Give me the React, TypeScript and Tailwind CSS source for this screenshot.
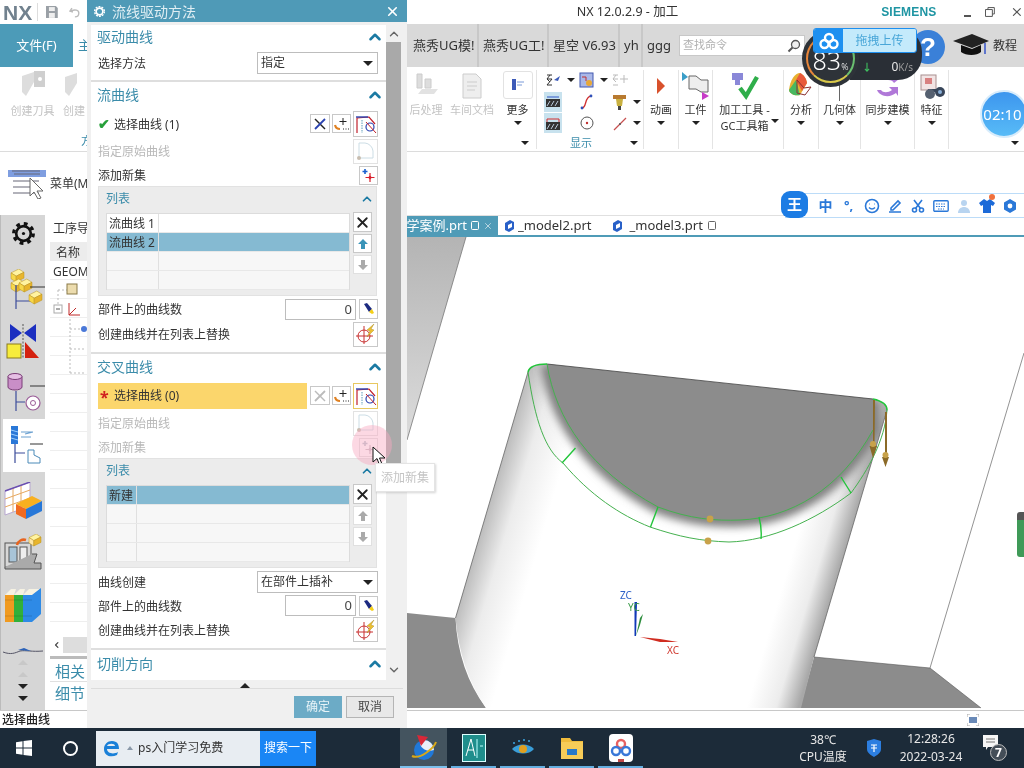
import { ChevronDown, ChevronLeft, ChevronUp, X } from "lucide-react";
import type { ReactNode } from "react";

function Caret({ className = "" }: { className?: string }) {
  return <span className={`inline-block w-0 h-0 border-x-[4px] border-x-transparent border-t-[4px] border-t-[#222] ${className}`} />;
}

function Cube({ x, y, s, c = "#f7d84a" }: { x: number; y: number; s: number; c?: string }) {
  return (
    <g stroke="#b8901c" strokeWidth="0.5">
      <polygon points={`${x},${y + s * 0.3} ${x + s * 0.6},${y} ${x + s},${y + s * 0.25} ${x + s * 0.4},${y + s * 0.55}`} fill="#fff3a0" />
      <polygon points={`${x},${y + s * 0.3} ${x + s * 0.4},${y + s * 0.55} ${x + s * 0.4},${y + s} ${x},${y + s * 0.75}`} fill={c} />
      <polygon points={`${x + s * 0.4},${y + s * 0.55} ${x + s},${y + s * 0.25} ${x + s},${y + s * 0.7} ${x + s * 0.4},${y + s}`} fill="#e8b52c" />
    </g>
  );
}

function TreeStem() {
  return (
    <g fill="none">
      <path d="M27 4H42" stroke="#333" strokeWidth="1" />
      <path d="M13 2V30M13 18H28" stroke="#3b4b9a" strokeWidth="1.2" />
    </g>
  );
}

/* left vertical tab strip */
function GearBig() {
  return (
    <svg width="25" height="25" viewBox="0 0 28 28">
      <circle cx="14" cy="14" r="11" fill="none" stroke="#111" strokeWidth="3.6" strokeDasharray="4.2 4.44" />
      <circle cx="14" cy="14" r="8.2" fill="none" stroke="#111" strokeWidth="3" />
      <circle cx="14" cy="14" r="1.8" fill="#111" />
    </svg>
  );
}

function SideGeometry() {
  return (
    <svg width="42" height="40" viewBox="0 0 42 40">
      <Cube x={8} y={0} s={13} />
      <Cube x={8} y={10} s={13} />
      <Cube x={16} y={10} s={13} />
      <g transform="translate(0,14)"><TreeStem /></g>
      <Cube x={26} y={22} s={13} />
    </svg>
  );
}

function SideMirror() {
  return (
    <svg width="34" height="38" viewBox="0 0 34 38">
      <polygon points="4,2 16,11 4,20" fill="#1c2fc0" />
      <polygon points="30,2 18,11 30,20" fill="#1c2fc0" />
      <rect x="1" y="22" width="14" height="14" fill="#f7ec3b" stroke="#8a7a20" />
      <polygon points="19,20 33,36 19,36" fill="#d4210f" />
      <path d="M17 2V37" stroke="#555" strokeDasharray="2 1.5" />
    </svg>
  );
}

function SideTool() {
  return (
    <svg width="42" height="40" viewBox="0 0 42 40">
      <path d="M5 9V4a7 3 0 0 1 14 0V14a7 3 0 0 1-14 0Z" fill="#c98ec7" stroke="#7b3e78" />
      <ellipse cx="12" cy="3.5" rx="7" ry="3" fill="#e6bfe4" stroke="#7b3e78" />
      <path d="M27 13H42" stroke="#333" />
      <path d="M13 18V38M13 29H22" stroke="#3b4b9a" strokeWidth="1.2" />
      <circle cx="30" cy="30" r="7" fill="#fff" stroke="#9a5d98" strokeWidth="1.2" />
      <circle cx="30" cy="30" r="2.5" fill="none" stroke="#9a5d98" />
    </svg>
  );
}

function SideOperation() {
  return (
    <svg width="38" height="40" viewBox="0 0 38 40">
      <rect x="6" y="0" width="7" height="18" fill="#2a78d8" />
      <path d="M6 4l7 2M6 8l7 2M6 12l7 2" stroke="#9dd0ff" />
      <path d="M16 6h12M16 11h10M20 8l8-2" stroke="#6ba0d0" strokeWidth="1.2" fill="none" />
      <path d="M25 18H38" stroke="#333" />
      <path d="M10 18V37M10 27H20" stroke="#3b4b9a" strokeWidth="1.2" />
      <path d="M23 24h6v5l6 3v5H23Z" fill="#fff" stroke="#4a8ab8" />
    </svg>
  );
}

function SideTable() {
  return (
    <svg width="38" height="38" viewBox="0 0 38 38">
      <polygon points="1,9 26,0 26,24 1,33" fill="#fff" stroke="#b8a8d0" />
      <path d="M1 17l25-9M1 25l25-9M9 6v24M17 3v24" stroke="#e6a860" />
      <path d="M1 9L26 0" stroke="#6a4fb0" strokeWidth="1.4" />
      <polygon points="12,22 28,14 38,19 22,27" fill="#f8b020" />
      <polygon points="12,22 22,27 22,37 12,32" fill="#f06a20" />
      <polygon points="22,27 38,19 38,29 22,37" fill="#2878d8" />
    </svg>
  );
}

function SideMachine() {
  return (
    <svg width="38" height="38" viewBox="0 0 38 38">
      <rect x="1" y="9" width="26" height="24" fill="#d8d8d8" stroke="#555" />
      <rect x="5" y="13" width="8" height="15" fill="#a8c4d8" stroke="#555" />
      <rect x="16" y="13" width="7" height="15" fill="#eee" stroke="#555" />
      <path d="M28 20h5l-3 9h7v6H1v-2" fill="#aaa" stroke="#555" />
      <path d="M13 11a7 7 0 0 1 9-5" fill="none" stroke="#e8641e" strokeWidth="2.5" />
      <Cube x={25} y={0} s={12} c="#ffe7a6" />
    </svg>
  );
}

function SideBooks() {
  return (
    <svg width="38" height="34" viewBox="0 0 38 34">
      <path d="M1 7 7 1H12L10 7Z" fill="#f6f2e2" />
      <rect x="1" y="7" width="9" height="27" fill="#f09a20" />
      <path d="M10 7 16 1H21L19 7Z" fill="#f6f2e2" />
      <rect x="10" y="7" width="9" height="27" fill="#32b03a" />
      <path d="M19 7 25 1H36L28 7Z" fill="#f6f2e2" />
      <polygon points="19,7 28,7 37,0 37,26 28,34 19,34" fill="#2e8ae6" />
      <path d="M1 12h27M1 28h27" stroke="#0002" />
    </svg>
  );
}

/* dialog small button drawings */
function CrossArrows({ muted }: { muted?: boolean }) {
  return (
    <svg width="14" height="14" viewBox="0 0 14 14">
      <path d="M2 2 12 12" stroke={muted ? "#bbb" : "#222"} strokeWidth="1.4" />
      <path d="M12 2 2 12" stroke={muted ? "#bbb" : "#2a42b0"} strokeWidth="1.8" />
    </svg>
  );
}

function PlusCurve() {
  return (
    <svg width="16" height="14" viewBox="0 0 16 14">
      <path d="M9 1v7M5.5 4.5h7" stroke="#222" strokeWidth="1" />
      <path d="M1 8q1 4 5 4" stroke="#e08020" strokeWidth="2.2" fill="none" />
      <path d="M9 12h1M11.5 12h1M14 12h1" stroke="#222" />
    </svg>
  );
}

function SelectCurve() {
  return (
    <svg width="22" height="20" viewBox="0 0 22 20">
      <path d="M2 19V4L14 3 20 10" fill="none" stroke="#c0202c" strokeWidth="1.2" />
      <path d="M1 3h12" stroke="#2a42b0" strokeWidth="1.4" />
      <path d="M7 6v13" stroke="#5a9ab8" strokeDasharray="1.5 1" />
      <circle cx="15" cy="13" r="4" fill="none" stroke="#2a42b0" strokeWidth="1.2" />
      <path d="M11 8 21 19" stroke="#c0202c" strokeWidth="1" />
    </svg>
  );
}

function OriginCurve() {
  return (
    <svg width="20" height="20" viewBox="0 0 20 20">
      <path d="M3 17V2h6a9 9 0 0 1 8 8v7Z" fill="none" stroke="#ccdde5" />
      <circle cx="3" cy="17" r="2" fill="#c8bdb0" />
    </svg>
  );
}

function SparkPlus({ muted }: { muted?: boolean }) {
  return (
    <svg width="14" height="14" viewBox="0 0 14 14">
      <path d="M8 5v9M3.500 9.500h9" stroke={muted ? "#c8bcc4" : "#d8202c"} strokeWidth="1.2" />
      <path d="M8 7.500 10 9.500 8 11.500 6 9.500Z" fill={muted ? "#c8bcc4" : "#d8202c"} />
      <path d="M3 1v5M0.500 3.500h5" stroke={muted ? "#b8c4cc" : "#1a60d0"} strokeWidth="1.6" />
    </svg>
  );
}

function PointerTool() {
  return (
    <svg width="12" height="12" viewBox="0 0 12 12">
      <path d="M1 1 4 0 9 6 6 9Z" fill="#1c2a80" />
      <path d="M6 9 9 6 11 10 9 11Z" fill="#f5d018" />
    </svg>
  );
}

function TargetBolt() {
  return (
    <svg width="22" height="22" viewBox="0 0 22 22">
      <circle cx="9" cy="13" r="6" fill="none" stroke="#c83030" />
      <path d="M9 3v18M1 13h17" stroke="#c83030" />
      <path d="M19 1 12 7l3 1-3 6 7-7-3-1Z" fill="#eec030" stroke="#a08018" strokeWidth="0.4" />
    </svg>
  );
}

function IconBtn({ children, className = "" }: { children: ReactNode; className?: string }) {
  return <div className={`flex items-center justify-center border border-[#c8c8c8] bg-white ${className}`}>{children}</div>;
}

function ArrowFat({ up, color }: { up?: boolean; color: string }) {
  return (
    <svg width="12" height="12" viewBox="0 0 12 12" className={up ? "" : "rotate-180"}>
      <path d="M6 1 11 6H8V11H4V6H1Z" fill={color} />
    </svg>
  );
}

function SectionHead({ title, className }: { title: string; className: string }) {
  return (
    <div className={`flex items-center justify-between pl-[6px] ${className}`}>
      <span className="text-[14px] text-[#3b8caa] -mt-[2px]">{title}</span>
      <ChevronUp size={18} strokeWidth={3.4} className="text-[#1b7aa3] -mr-[6px] -mt-[1px]" />
    </div>
  );
}

function ListBox({ rows, colW, active, upOn }: { rows: string[]; colW: string; active: number; upOn: boolean }) {
  return (
    <div className="ml-[7px] w-[279px] h-[110px] bg-[#ececec] border border-[#e2e2e2] relative">
      <div className="h-[26px] flex items-center justify-between pl-[7px] pr-[2px]">
        <span className="text-[12px] text-[#3b8caa] -mt-[3px]">列表</span>
        <ChevronUp size={14} strokeWidth={3} className="text-[#1b7aa3] -mt-[3px]" />
      </div>
      <div className="flex pl-[7px] gap-[3px]">
        <div className="w-[244px] h-[77px] bg-[#f7f7f7] border border-[#dcdcdc]">
          {[0, 1, 2, 3].map((i) => (
            <div key={i} className={`flex h-[19px] text-[12px] border-b border-[#e8e8e8] ${i === active ? "bg-[#85bad2]" : i < rows.length ? "bg-white" : ""}`}>
              <div className={`${colW} pl-[2px] border-r border-[#e0e0e0] leading-[20px] text-[#333]`}>{rows[i]}</div>
            </div>
          ))}
        </div>
        <div className="flex flex-col gap-[2px] -mt-[1px]">
          <IconBtn className="w-[19px] h-[20px]"><X size={17} strokeWidth={2.6} className="text-[#222]" /></IconBtn>
          <IconBtn className={`w-[19px] h-[19px] ${upOn ? "" : "border-[#e0e0e0] bg-[#f2f2f2]"}`}><ArrowFat up color={upOn ? "#3a94b8" : "#aaa"} /></IconBtn>
          <IconBtn className="w-[19px] h-[19px] border-[#e0e0e0] bg-[#f2f2f2]"><ArrowFat color="#aaa" /></IconBtn>
        </div>
      </div>
    </div>
  );
}

function DropDown({ text }: { text: string }) {
  return (
    <div className="w-[121px] h-[22px] border border-[#bdbdbd] bg-white flex items-center justify-between pl-[3px] pr-[4px] text-[12px] text-[#333]">
      {text}
      <Caret className="border-x-[5px] border-t-[5px]" />
    </div>
  );
}

function CountRow() {
  return (
    <div className="flex items-center gap-[3px]">
      <div className="w-[71px] h-[21px] border border-[#bdbdbd] bg-white text-right pr-[3px] text-[13px] leading-[19px] text-[#444]">0</div>
      <IconBtn className="w-[19px] h-[20px]"><PointerTool /></IconBtn>
    </div>
  );
}

function Row({ label, h, muted, children }: { label: string; h: string; muted?: boolean; children?: ReactNode }) {
  return (
    <div className={`flex items-center justify-between pl-[7px] ${h}`}>
      <span className={`text-[12px] mt-[2px] ${muted ? "text-[#b8b8b8]" : "text-[#333]"}`}>{label}</span>
      {children}
    </div>
  );
}

function SelectorTools({ muted }: { muted?: boolean }) {
  return (
    <>
      <IconBtn className="w-[20px] h-[19px] ml-[3px]"><CrossArrows muted={muted} /></IconBtn>
      <IconBtn className="w-[19px] h-[19px] ml-[2px]"><PlusCurve /></IconBtn>
      <IconBtn className={`w-[25px] h-[26px] ml-[2px] ${muted ? "border-[#e8c860] bg-[#fbd66c]" : ""}`}><SelectCurve /></IconBtn>
    </>
  );
}

function FlowDialog() {
  return (
    <div className="absolute left-[87px] top-0 w-[320px] h-[728px] bg-[#f0f0f0] flex flex-col">
      <div className="h-[22px] shrink-0 bg-[#4f9ab7] flex items-center pl-[6px] pr-[7px] text-white">
        <svg width="13" height="13" viewBox="0 0 14 14">
          <circle cx="7" cy="7" r="5.2" fill="none" stroke="#fff" strokeWidth="1.6" strokeDasharray="2 1.26" />
          <circle cx="7" cy="7" r="3.6" fill="none" stroke="#fff" strokeWidth="1.8" />
        </svg>
        <span className="ml-[6px] text-[14px] text-[#e0eef3]">流线驱动方法</span>
        <X size={15} strokeWidth={2.6} className="ml-auto" />
      </div>
      <div className="flex pl-[4px] h-[658px] pt-[3px]">
        <div className="w-[295px] bg-white">
          <section className="h-[57px] border-b-2 border-[#dedede] pr-[8px]">
            <SectionHead title="驱动曲线" className="h-[24px]" />
            <Row label="选择方法" h="h-[26px] mt-[1px]"><DropDown text="指定" /></Row>
          </section>
          <section className="h-[272px] border-b-2 border-[#dedede] pr-[8px]">
            <SectionHead title="流曲线" className="h-[27px]" />
            <div className="h-[29px] flex items-center pl-[7px]">
              <span className="text-[#27a03a] text-[14px] font-bold w-[16px] leading-none">✔</span>
              <span className="text-[12px] text-[#333] mt-[2px]">选择曲线 (1)</span>
              <div className="ml-auto flex items-center"><SelectorTools /></div>
            </div>
            <Row label="指定原始曲线" h="h-[26px]" muted><IconBtn className="w-[25px] h-[25px] border-[#e2e2e2]"><OriginCurve /></IconBtn></Row>
            <Row label="添加新集" h="h-[22px]"><IconBtn className="w-[19px] h-[19px]"><SparkPlus /></IconBtn></Row>
            <ListBox rows={["流曲线 1", "流曲线 2"]} colW="w-[52px]" active={1} upOn />
            <div className="h-px" />
            <Row label="部件上的曲线数" h="h-[24px]"><CountRow /></Row>
            <Row label="创建曲线并在列表上替换" h="h-[26px]"><IconBtn className="w-[25px] h-[25px]"><TargetBolt /></IconBtn></Row>
          </section>
          <section className="h-[296px] border-b-2 border-[#dedede] pr-[8px]">
            <SectionHead title="交叉曲线" className="h-[27px]" />
            <div className="h-[29px] flex items-center pl-[7px]">
              <div className="w-[210px] h-[26px] bg-[#fbd66c] flex items-center">
                <span className="text-[#d02020] text-[16px] font-bold w-[16px] pl-[2px] leading-none pt-[3px]">*</span>
                <span className="text-[12px] text-[#333] mt-[1px]">选择曲线 (0)</span>
              </div>
              <div className="ml-auto flex items-center"><SelectorTools muted /></div>
            </div>
            <Row label="指定原始曲线" h="h-[26px]" muted><IconBtn className="w-[25px] h-[25px] border-[#e2e2e2]"><OriginCurve /></IconBtn></Row>
            <Row label="添加新集" h="h-[22px]" muted><IconBtn className="w-[19px] h-[19px] border-[#e2e2e2]"><SparkPlus muted /></IconBtn></Row>
            <ListBox rows={["新建"]} colW="w-[30px]" active={0} upOn={false} />
            <div className="h-px" />
            <Row label="曲线创建" h="h-[26px]"><DropDown text="在部件上插补" /></Row>
            <Row label="部件上的曲线数" h="h-[21px]"><CountRow /></Row>
            <Row label="创建曲线并在列表上替换" h="h-[27px]"><IconBtn className="w-[25px] h-[25px]"><TargetBolt /></IconBtn></Row>
          </section>
          <section className="pr-[8px]">
            <SectionHead title="切削方向" className="h-[29px]" />
          </section>
        </div>
        <div className="w-[21px] flex flex-col items-center">
          <ChevronUp size={14} strokeWidth={2.4} className="text-[#666] mt-[2px] mr-[6px]" />
          <div className="w-[15px] h-[423px] mt-[1px] mr-[6px] bg-[#a9a9a9]" />
          <ChevronDown size={14} strokeWidth={2.4} className="text-[#666] mt-[198px] mr-[6px]" />
        </div>
      </div>
      <div className="flex justify-center pr-[4px] pt-[3px] h-[8px]">
        <span className="w-0 h-0 border-x-[5px] border-x-transparent border-b-[5px] border-b-[#222]" />
      </div>
      <div className="mx-[4px] border-t border-[#dcdcdc] mt-0" />
      <div className="flex justify-end gap-[4px] pr-[13px] pt-[7px]">
        <div className="w-[48px] h-[22px] bg-[#6cabc6] text-[#e8f4f8] text-[12px] flex items-center justify-center">确定</div>
        <div className="w-[48px] h-[22px] bg-[#e8e8e8] border border-[#b5b5b5] text-[#444] text-[12px] flex items-center justify-center">取消</div>
      </div>
    </div>
  );
}

/* 3D viewport, drawn in page coordinates */
function ModelView() {
  const inner = "M547 364C556 420 590 470 658 507 C690 519 715 521 740 520 C790 518 840 490 873 430 L873 399";
  return (
    <svg viewBox="407 237 617 473" className="block w-full h-[473px]">
      <defs>
        <linearGradient id="bodyShade" gradientUnits="userSpaceOnUse" x1="528" y1="372" x2="868" y2="473">
          <stop offset="0" stopColor="#bcbcbc" />
          <stop offset="0.07" stopColor="#ececec" />
          <stop offset="0.17" stopColor="#fff" />
          <stop offset="0.86" stopColor="#fff" />
          <stop offset="0.94" stopColor="#ececec" />
          <stop offset="1" stopColor="#a8a8a8" />
        </linearGradient>
        <linearGradient id="stripShade" x1="0" y1="0" x2="0" y2="1">
          <stop offset="0" stopColor="#b4b4b4" />
          <stop offset="1" stopColor="#dcdcdc" />
        </linearGradient>
        <filter id="soft" x="-20%" y="-20%" width="140%" height="140%"><feGaussianBlur stdDeviation="4" /></filter>
        <clipPath id="bodyClip">
          <path d="M528 372Q530 364 547 364L873 399Q887 402 887 410L814 657 801 708H486Q460 670 455.500 618Z" />
        </clipPath>
      </defs>
      <rect x="407" y="237" width="617" height="473" fill="#fff" />
      <polygon points="407,237 466,237 407,440" fill="url(#stripShade)" />
      <path d="M466 237 407 440M1024 353 930 668" stroke="#777" strokeWidth="0.8" fill="none" />
      <polygon points="814,657 930,668 981,708 800,708" fill="#8c8c8c" />
      <path d="M407 613 455.500 618Q458 670 486 708H407Z" fill="#8c8c8c" />
      <path d="M814 657 930 668 981 708" stroke="#555" strokeWidth="0.6" fill="none" />
      <path d="M528 372Q530 364 547 364L873 399Q887 402 887 410L814 657 801 708H486Q460 670 455.500 618Z" fill="url(#bodyShade)" />
      <path d="M528 372 455.500 618M887 410 814 657" stroke="#666" strokeWidth="0.8" fill="none" />
      <g clipPath="url(#bodyClip)">
        <path d={inner} fill="none" stroke="#7c7c7c" strokeWidth="13" filter="url(#soft)" />
      </g>
      <path d={`${inner}Z`} fill="#8c8c8c" />
      <path d="M547 364 873 399" stroke="#444" strokeWidth="0.8" />
      <g fill="none" stroke="#45b14f" strokeWidth="1">
        <path d={inner.replace(" L873 399", "")} strokeWidth="1" />
        <path d="M528 372C535 420 545 450 563 463 C590 495 620 515 650 527 C680 537 700 541 729 542 C770 541 815 520 851 493 C868 470 885 440 887 410" />
        <path d="M528 372Q530 364 547 364M873 399Q887 402 887 410" stroke="#22c53a" strokeWidth="1.6" />
        <path d="M575.500 448 562 463M658 507 650.500 527M759 517Q762 528 761 539M841 477 851 493" stroke="#22c53a" strokeWidth="1.4" />
      </g>
      <circle cx="710" cy="519" r="3.4" fill="#c8a24a" />
      <circle cx="708" cy="541" r="3.4" fill="#c8a24a" />
      <g fill="#8b6a28">
        <polygon points="873,400 875,400 874.500,444 873,444" />
        <polygon points="869.500,446 877,446 873,458" />
        <polygon points="885,412 887,412 887,455 885,455" />
        <polygon points="882,457 889,457 885.500,467" />
      </g>
      <circle cx="873" cy="444" r="3" fill="#c8a24a" />
      <circle cx="885.500" cy="455" r="3" fill="#c8a24a" />
      <polygon points="634.500,602 637,602 636,636 634.500,636" fill="#1038b8" />
      <polygon points="636,636 640,618 643,614 640,625" fill="#2c8c3c" />
      <polygon points="640,637 660,639 678,642 660,642" fill="#d02c20" />
      <text x="620" y="599" fontSize="10" fill="#2e62c8" fontFamily="Noto Sans">ZC</text>
      <text x="628" y="611" fontSize="10" fill="#3a9a48" fontFamily="Noto Sans">YC</text>
      <text x="667" y="654" fontSize="10" fill="#d03a30" fontFamily="Noto Sans">XC</text>
    </svg>
  );
}

function RibbonTool({ w, icon, label, disabled, arrow = true }: { w: string; icon: ReactNode; label: string; disabled?: boolean; arrow?: boolean }) {
  return (
    <div className={`flex flex-col items-center shrink-0 h-full ${w}`}>
      <div className="h-[31px] flex items-center justify-center">{icon}</div>
      <span className={`text-[11px] leading-[15px] whitespace-nowrap mt-[1px] ${disabled ? "text-[#c4c4c4]" : "text-[#333]"}`}>{label}</span>
      {arrow && <Caret className="mt-[4px]" />}
    </div>
  );
}

function MiniGlyph({ children }: { children: ReactNode }) {
  return <svg width="20" height="20" viewBox="0 0 20 20">{children}</svg>;
}

function ShowGroup() {
  const cell = "flex items-center gap-[3px] h-[21px] w-[33px]";
  const lit = "w-[18px] h-[20px] bg-[#c8e2ee] flex items-center justify-center";
  return (
    <div className="w-[107px] h-full border-r border-[#e4e4e4] pl-[7px] relative shrink-0">
      <div className="flex flex-col -mt-[1px]">
        <div className="flex mb-[1px]">
          <div className={cell}>
            <MiniGlyph><path d="M3 5h5M3 9h5M6 5l-3 4 3 3M3 15h5M8 9l-5 6" stroke="#333" fill="none" /><path d="M10 10l6-4-2 5Z" fill="#3c5ab8" /></MiniGlyph>
            <Caret />
          </div>
          <div className={cell}>
            <MiniGlyph><rect x="3" y="3" width="13" height="14" fill="#aab8e8" stroke="#4258b0" /><circle cx="12" cy="13" r="3" fill="#e8a838" /><path d="M5 7h4v4" stroke="#c03030" fill="none" /></MiniGlyph>
            <Caret />
          </div>
          <div className={cell}>
            <MiniGlyph><path d="M3 5h5M3 9h5M6 5l-3 4 3 3M3 15h5" stroke="#bbb" fill="none" /><path d="M14 5v8M10 9h8" stroke="#bbb" /></MiniGlyph>
          </div>
        </div>
        <div className="flex">
          <div className={cell}><div className={lit}><svg width="14" height="11" viewBox="0 0 14 11"><rect y="3" width="14" height="8" fill="#333" /><path d="M1 10l3-5M5 10l3-5M9 10l3-5" stroke="#bcd" /><path d="M1 1h12" stroke="#3058c8" /></svg></div></div>
          <div className={cell}><MiniGlyph><path d="M5 16c5 0 2-11 9-12" stroke="#d03030" strokeWidth="1.3" fill="none" /><circle cx="5" cy="16" r="1.4" fill="#3050b8" /><circle cx="14" cy="4" r="1.4" fill="#3050b8" /></MiniGlyph></div>
          <div className={cell}>
            <MiniGlyph><rect x="3" y="3" width="13" height="4" fill="#b87a30" /><polygon points="6,7 13,7 12,14 7,14" fill="#c8b040" /><rect x="8" y="14" width="3" height="4" fill="#444" /></MiniGlyph>
            <Caret />
          </div>
        </div>
        <div className="flex">
          <div className={cell}><div className={lit}><svg width="14" height="14" viewBox="0 0 14 14"><rect y="6" width="14" height="8" fill="#333" /><path d="M1 13l3-5M5 13l3-5M9 13l3-5" stroke="#bcd" /><path d="M1 6V3h12v3" stroke="#d03030" fill="none" /></svg></div></div>
          <div className={cell}><MiniGlyph><circle cx="10" cy="10" r="6" fill="none" stroke="#555" /><circle cx="10" cy="10" r="1.2" fill="#c03030" /></MiniGlyph></div>
          <div className={cell}>
            <MiniGlyph><path d="M4 17 16 5" stroke="#c85050" strokeWidth="1.2" /><circle cx="10" cy="11" r="1" fill="#555" /></MiniGlyph>
            <Caret />
          </div>
        </div>
      </div>
      <span className="absolute left-[33px] bottom-[-2px] text-[11px] text-[#3b8caa]">显示</span>
      <Caret className="absolute right-[5px] bottom-[4px]" />
    </div>
  );
}

function TopRibbonRight() {
  return (
    <div className="flex-1 h-full flex pt-[3px] pb-[2px]">
      <div className="w-[130px] h-full border-r border-[#e4e4e4] flex relative shrink-0">
        <RibbonTool w="w-[38px]" disabled arrow={false} label="后处理" icon={
          <svg width="28" height="28" viewBox="0 0 28 28"><path d="M5 2h5v14H5ZM13 7h6v9h-6Z" fill="#ddd" stroke="#ccc" /><path d="M6 22h16l4-5H10Z" fill="#e2e2e2" /></svg>
        } />
        <RibbonTool w="w-[54px]" disabled arrow={false} label="车间文档" icon={
          <svg width="22" height="26" viewBox="0 0 22 26"><path d="M2 1h13l5 5v19H2Z" fill="#eee" stroke="#ccc" /><path d="M6 9h10M6 13h10M6 17h8" stroke="#ccc" /></svg>
        } />
        <div className="w-[38px] flex flex-col items-center">
          <div className="w-[30px] h-[28px] border border-[#e2e2e2] rounded-[3px] flex items-center justify-center mt-[1px]">
            <svg width="14" height="14" viewBox="0 0 14 14"><rect x="1" y="1" width="4" height="11" fill="#3c5ab8" /><path d="M6 4h7M6 7h5" stroke="#7a9ad8" /></svg>
          </div>
          <span className="text-[11px] leading-[15px] mt-[3px] text-[#333]">更多</span>
          <Caret className="mt-[4px]" />
        </div>
        <Caret className="absolute right-[7px] bottom-[4px]" />
      </div>
      <ShowGroup />
      <div className="w-[35px] border-r border-[#e4e4e4] shrink-0">
        <RibbonTool w="w-full" label="动画" icon={<svg width="10" height="18" viewBox="0 0 10 18"><polygon points="1,1 9,9 1,17" fill="#d8512c" /></svg>} />
      </div>
      <div className="w-[34px] border-r border-[#e4e4e4] shrink-0">
        <RibbonTool w="w-full" label="工件" icon={
          <svg width="28" height="30" viewBox="0 0 28 30"><path d="M7 5h7l5 4h7v12h-7l-5-3H7Z" fill="#eee" stroke="#666" /><polygon points="0,1 6,6 0,10" fill="#3a9ec8" /><polygon points="20,21 27,25 20,29" fill="#c83cc8" /></svg>
        } />
      </div>
      <div className="w-[71px] border-r border-[#e4e4e4] shrink-0 relative flex flex-col items-center pr-[7px]">
        <div className="h-[31px] flex items-center">
          <svg width="28" height="30" viewBox="0 0 28 30"><path d="M1 2h11v7H9v5H4V9H1Z" fill="#8a88d8" /><path d="M9 17l6 8L26 6" fill="none" stroke="#2fae4a" strokeWidth="4.400" /></svg>
        </div>
        <span className="text-[11px] leading-[15px] mt-[1px] text-[#333]">加工工具 -</span>
        <span className="text-[11px] leading-[18px] text-[#333]">GC工具箱</span>
        <Caret className="absolute right-[4px] top-[49px]" />
      </div>
      <div className="w-[35px] border-r border-[#e4e4e4] shrink-0">
        <RibbonTool w="w-full" label="分析" icon={
          <svg width="26" height="28" viewBox="0 0 26 28"><path d="M1 18C2 8 7 1 12 1c4 2 6 5 7 10l-7 12C6 24 2 22 1 18Z" fill="#e8b030" /><path d="M12 1c4 2 6 5 7 10l-5 8L8 8Z" fill="#e85a3c" /><path d="M1 18 8 8l4 15C6 24 2 22 1 18Z" fill="#48b860" /><path d="M9 8l7 8 7-1-6 8-8-2Z" fill="none" stroke="#8a3030" /></svg>
        } />
      </div>
      <div className="w-[42px] border-r border-[#e4e4e4] shrink-0">
        <RibbonTool w="w-full" label="几何体" icon={<div className="w-px h-[22px] bg-[#666] mt-[8px]" />} />
      </div>
      <div className="w-[54px] border-r border-[#e4e4e4] shrink-0">
        <RibbonTool w="w-full" label="同步建模" icon={
          <svg width="26" height="26" viewBox="0 0 26 26"><path d="M2 17c3 7 13 8 19 3l2 3v-9h-9l3 3c-4 3-9 3-11 0Z" fill="#b078d8" /><path d="M24 6c-2-4-6-6-11-5v6c3 0 5 1 6 3Z" fill="#b078d8" /></svg>
        } />
      </div>
      <div className="w-[34px] border-r border-[#e4e4e4] shrink-0">
        <RibbonTool w="w-full" label="特征" icon={
          <svg width="28" height="28" viewBox="0 0 28 28"><rect x="3" y="3" width="15" height="15" fill="#f2e4e4" stroke="#a89090" /><rect x="7" y="6" width="7" height="6" fill="#d88080" /><path d="M10 17h12v3H10Z" fill="#38465a" /><circle cx="12" cy="22" r="5" fill="#556070" /><circle cx="22" cy="20" r="5" fill="#38465a" /><circle cx="22" cy="20" r="2" fill="#8ab0d8" /></svg>
        } />
      </div>
      <div className="flex-1 relative"><Caret className="absolute right-[5px] bottom-[4px]" /></div>
    </div>
  );
}

function QuickTab({ text, w }: { text: string; w: string }) {
  return <div className={`${w} h-full flex items-center border-r-2 border-[#c8c8c8] text-[13px] text-[#333] whitespace-nowrap pl-[4px] shrink-0`}>{text}</div>;
}

function FileCube() {
  return (
    <svg width="12" height="14" viewBox="0 0 12 14" className="block"><path d="M2 4 7 1l4 2v7l-5 3-4-2Z" fill="#2860c8" /><path d="M5 6l4-2v4l-4 2Z" fill="#fff" /></svg>
  );
}

function SideTabs() {
  const wrap = "flex justify-center items-center";
  return (
    <div className="w-[45px] h-full bg-[#d6d6d6] border-l border-[#bbb] flex flex-col shrink-0">
      <div className={`${wrap} h-[36px]`}><GearBig /></div>
      <div className="flex justify-center items-start h-[70px] pt-[18px] pl-[2px]"><SideGeometry /></div>
      <div className={`${wrap} h-[40px]`}><SideMirror /></div>
      <div className="flex justify-center items-start h-[58px] pt-[12px] pl-[2px]"><SideTool /></div>
      <div className={`${wrap} h-[53px] bg-white ml-[2px]`}><SideOperation /></div>
      <div className={`${wrap} h-[55px] pt-[2px]`}><SideTable /></div>
      <div className={`${wrap} h-[52px]`}><SideMachine /></div>
      <div className={`${wrap} h-[52px]`}><SideBooks /></div>
      <svg width="42" height="12" viewBox="0 0 42 12" className="ml-[1px] mt-[14px]"><path d="M1 7c8 3 12 1 17-1 6-1 12 1 23 0" stroke="#556" fill="none" /><path d="M16 5l6-2 7 3Z" fill="#2c62b8" /></svg>
      <div className="flex flex-col items-center mt-[3px] gap-[7px]">
        <span className="w-0 h-0 border-x-[5px] border-x-transparent border-b-[5px] border-b-[#c8c8c8]" />
        <span className="w-0 h-0 border-x-[5px] border-x-transparent border-b-[5px] border-b-[#c8c8c8]" />
        <Caret className="border-x-[5px] border-t-[5px]" />
        <Caret className="border-x-[5px] border-t-[5px]" />
      </div>
    </div>
  );
}

function Navigator() {
  const rows = ["GEOM", ...Array<string>(19).fill("")];
  return (
    <div className="w-[42px] h-full flex flex-col overflow-hidden shrink-0 pl-[5px]">
      <div className="h-[27px] flex items-center pl-[3px] text-[12px] text-[#333] whitespace-nowrap">工序导</div>
      <div className="h-[19px] bg-[#ececec] pl-[6px] text-[12px] text-[#333] leading-[21px]">名称</div>
      <div className="flex-1 overflow-hidden relative">
        {rows.map((t, i) => (
          <div key={i} className="h-[19px] border-b border-[#eee] text-[12px] leading-[21px] pl-[3px] text-[#333]">{t}</div>
        ))}
        <svg width="37" height="110" viewBox="0 0 37 110" className="absolute left-0 top-[20px]">
          <path d="M8 9V28M8 9h10M20 38V92M20 48h14M20 68h14M20 92h14" stroke="#bbb" strokeDasharray="2 2" fill="none" />
          <rect x="17" y="3" width="10" height="10" fill="#ecdcae" stroke="#8a7a48" />
          <rect x="4" y="24" width="8" height="8" fill="#fff" stroke="#aaa" />
          <path d="M6 28h4" stroke="#555" />
          <path d="M19 22v12M19 34h11M19 34l7-7" stroke="#c02828" fill="none" />
          <circle cx="34" cy="48" r="3" fill="#4a78d8" />
        </svg>
      </div>
      <div className="h-[16px] flex items-center shrink-0 bg-white mt-[1px]">
        <ChevronLeft size={12} strokeWidth={3} className="text-[#444] ml-[2px]" />
        <div className="ml-[2px] w-[30px] h-full bg-[#ddd]" />
      </div>
      <div className="h-[3px] bg-[#bbb] shrink-0 mt-[3px]" />
      <div className="h-[23px] border-b border-[#e0e0e0] text-[15px] leading-[24px] text-[#3b8caa] pl-[5px] shrink-0 whitespace-nowrap">相关</div>
      <div className="h-[28px] text-[15px] leading-[22px] text-[#3b8caa] pl-[5px] shrink-0">细节</div>
    </div>
  );
}

function AppIcons() {
  return (
    <>
      <div className="w-[47px] h-full bg-[#44545f] relative flex items-center justify-center">
        <svg width="28" height="28" viewBox="0 0 28 28">
          <circle cx="14" cy="16" r="10" fill="#2078d8" />
          <path d="M14 6a10 10 0 0 1 10 10c-6 2-12 0-14-6Z" fill="#e8eef8" />
          <path d="M2 22C10 26 24 14 26 8" stroke="#d8a818" strokeWidth="2" fill="none" />
          <polygon points="7,1 18,3 11,12" fill="#d82838" />
        </svg>
        <div className="absolute bottom-0 inset-x-0 h-[2px] bg-[#7cc0ec]" />
      </div>
      {[
        <svg key="a" width="24" height="28" viewBox="0 0 24 28"><rect x="0.500" y="0.500" width="23" height="27" fill="#1f8e8c" stroke="#dff" /><path d="M4 22 9 5l4 17M6 16h6" stroke="#fff" fill="none" /><path d="M15 5v19M18 12h3" stroke="#bff" /></svg>,
        <svg key="b" width="24" height="18" viewBox="0 0 24 18"><path d="M1 10c5-6 17-6 22 0-5 6-17 6-22 0Z" fill="#3a9ed8" /><circle cx="12" cy="10" r="4" fill="#e0a020" /><path d="M3 3v2M8 1v2M13 0v2M18 1v2" stroke="#3a9ed8" strokeWidth="1.600" /></svg>,
        <svg key="c" width="22" height="22" viewBox="0 0 22 22"><path d="M0 1h9l2 3h11v18H0Z" fill="#f0bc3c" /><rect x="0" y="5" width="22" height="17" fill="#f7cc58" /><path d="M6 18v-6h10v6Z" fill="#2878c8" /></svg>,
        <svg key="d" width="24" height="28" viewBox="0 0 24 28"><rect width="24" height="28" rx="4" fill="#fff" /><circle cx="12" cy="10" r="4" fill="none" stroke="#e86060" strokeWidth="2.400" /><circle cx="7" cy="17" r="4" fill="none" stroke="#3a78d8" strokeWidth="2.400" /><circle cx="17" cy="17" r="4" fill="none" stroke="#3a78d8" strokeWidth="2.400" /><rect x="9" y="25" width="6" height="3" fill="#c04848" /></svg>,
      ].map((icon, i) => (
        <div key={i} className="w-[45px] ml-[4px] h-full relative flex items-center justify-center">
          {icon}
          <div className="absolute bottom-0 inset-x-0 h-[2px] bg-[#64aee0]" />
        </div>
      ))}
    </>
  );
}

function Taskbar() {
  return (
    <div className="h-[40px] shrink-0 bg-[#1c2b39] flex items-center text-white relative">
      <div className="w-[96px] h-full flex items-center shrink-0 pl-[16px]">
        <svg width="16" height="16" viewBox="0 0 16 16"><path d="M0 2.200 6.500 1.300V7.500H0ZM7.500 1.100 16 0V7.500H7.500ZM0 8.500H6.500V14.700L0 13.800ZM7.500 8.500H16V16L7.500 14.900Z" fill="#fff" /></svg>
        <div className="ml-[31px] w-[15px] h-[15px] rounded-full border-[2px] border-white" />
      </div>
      <div className="w-[164px] h-[35px] bg-[#e8edf2] flex items-center shrink-0 pl-[6px]">
        <svg width="20" height="20" viewBox="0 0 20 20"><path d="M17 11H5c0 4 6 6 11 3l-1 3c-6 3-13 1-13-6 0-6 6-10 12-7 2 1 3 4 3 7ZM5 8h8c0-3-7-3-8 0Z" fill="#1a80d8" /></svg>
        <span className="w-0 h-0 ml-[5px] border-x-[3px] border-x-transparent border-b-[4px] border-b-[#8a98a8]" />
        <span className="ml-[5px] text-[12px] text-[#333]">ps入门学习免费</span>
      </div>
      <div className="w-[56px] h-[35px] bg-[#1a86f5] shrink-0 flex items-center justify-center text-[12px]">搜索一下</div>
      <div className="w-[84px] shrink-0" />
      <div className="flex h-full w-[243px] shrink-0"><AppIcons /></div>
      <div className="w-[142px] shrink-0" />
      <div className="w-[76px] shrink-0 flex flex-col items-center text-[12px] leading-[17px] text-[#e8e8e8]">
        <span>38℃</span>
        <span>CPU温度</span>
      </div>
      <svg width="14" height="18" viewBox="0 0 14 18" className="ml-[6px] shrink-0">
        <path d="M7 0 14 2V10C14 14 10 16 7 18 4 16 0 14 0 10V2Z" fill="#2c7ee0" />
        <path d="M4 6h6M4 9h6M7 6v7" stroke="#fff" strokeWidth="1.200" />
      </svg>
      <div className="ml-[13px] w-[74px] shrink-0 flex flex-col items-center text-[12px] leading-[18px] text-[#e8e8e8]">
        <span>12:28:26</span>
        <span className="whitespace-nowrap">2022-03-24</span>
      </div>
      <div className="ml-[15px] relative w-[24px] h-[26px] shrink-0">
        <svg width="15" height="15" viewBox="0 0 15 15" className="absolute left-0 top-0"><path d="M0 0H15V12H5L3 15V12H0Z" fill="#f5f5f5" /><path d="M3 4h9M3 7h9" stroke="#777" /></svg>
        <div className="absolute right-0 bottom-0 w-[17px] h-[17px] rounded-full bg-[#444e58] border border-[#bbb] text-[12px] font-bold flex items-center justify-center leading-none">7</div>
      </div>
    </div>
  );
}

export default function App() {
  return (
    <div className="relative w-[1024px] h-[768px] overflow-hidden bg-white flex flex-col blur-[0.3px] font-['Noto_Sans','Noto_Sans_CJK_SC',sans-serif]">
      {/* title bar */}
      <div className="h-[24px] shrink-0 flex items-center bg-white">
        <span className="ml-[3px] text-[21px] font-bold text-[#71818e] leading-none font-['Liberation_Sans']">NX</span>
        <div className="ml-[5px] w-px h-[18px] bg-[#ddd]" />
        <svg width="12" height="12" viewBox="0 0 12 12" className="ml-[8px]"><path d="M0 0H10L12 2V12H0Z" fill="#9aa0a6" /><rect x="3" y="1" width="6" height="4" fill="#eee" /><rect x="3" y="7" width="6" height="5" fill="#eee" /></svg>
        <svg width="12" height="12" viewBox="0 0 12 12" className="ml-[11px]"><path d="M3 2 1 5l3 1M2 5c4-2 8-1 8 2s-2 4-4 4" stroke="#bbb" strokeWidth="1.400" fill="none" /></svg>
        <span className="ml-[496px] text-[12.5px] text-[#333] whitespace-nowrap">NX 12.0.2.9 - 加工</span>
        <span className="ml-[203px] text-[12px] font-bold tracking-[0.2px] text-[#1f95a3] font-['Liberation_Sans']">SIEMENS</span>
        <div className="ml-[27px] w-[8px] h-[1.500px] bg-[#555] mt-[8px]" />
        <svg width="10" height="10" viewBox="0 0 10 10" className="ml-[14px]"><path d="M3 2.500V0.500H9.500V7H7.500M0.500 2.500H7.500V9.500H0.500Z" fill="none" stroke="#555" /></svg>
        <X size={14} className="ml-[15px] text-[#555]" />
      </div>

      {/* tab row with quick access */}
      <div className="h-[43px] shrink-0 flex">
        <div className="w-[73px] bg-[#4c9bb8] flex items-center justify-center text-[13px] text-white shrink-0">文件(F)</div>
        <div className="w-[14px] bg-white pl-[5px] pt-[12px] text-[13px] text-[#3b8caa] overflow-hidden shrink-0">主</div>
        <div className="w-[320px] shrink-0" />
        <div className="flex-1 bg-[#d9d9d9] flex items-center pl-[2px]">
          <QuickTab w="w-[70px]" text="燕秀UG模!" />
          <QuickTab w="w-[70px]" text="燕秀UG工!" />
          <QuickTab w="w-[71px]" text="星空 V6.93" />
          <QuickTab w="w-[23px]" text="yh" />
          <div className="w-[34px] pl-[4px] text-[13px] text-[#333]">ggg</div>
          <div className="w-[126px] h-[21px] bg-white border border-[#c8c8c8] flex items-center justify-between px-[3px] ml-[2px] text-[11px] text-[#b0b0b0]">
            查找命令
            <svg width="14" height="14" viewBox="0 0 14 14"><circle cx="8.500" cy="5.500" r="4" fill="#eee" stroke="#555" strokeWidth="1.300" /><path d="M5.500 8.500 1.500 12.500" stroke="#555" strokeWidth="2" /></svg>
          </div>
          <svg width="36" height="36" viewBox="0 0 36 36" className="ml-[105px] mt-[2px] shrink-0">
            <circle cx="18" cy="18" r="17" fill="#3a80d8" />
            <text x="18" y="27" textAnchor="middle" fontSize="26" fontWeight="700" fill="#fff" fontFamily="Liberation Sans">?</text>
          </svg>
          <svg width="36" height="26" viewBox="0 0 36 26" className="ml-[7px] shrink-0">
            <polygon points="0,8 19,1 36,8 19,15" fill="#222" />
            <path d="M8 12v7c5 4 16 4 20 0v-7l-9 4Z" fill="#111" />
            <path d="M32 10v11" stroke="#2a4ac8" strokeWidth="1.400" />
          </svg>
          <span className="ml-[4px] text-[12px] text-[#333] whitespace-nowrap">教程</span>
        </div>
      </div>

      {/* ribbon */}
      <div className="h-[85px] shrink-0 flex border-b border-[#dcdcdc]">
        <div className="w-[87px] flex pt-[3px] shrink-0 overflow-hidden">
          <div className="w-[65px] flex flex-col items-center shrink-0">
            <svg width="26" height="30" viewBox="0 0 26 30"><path d="M2 6 14 2v10L6 26l-4-4Z" fill="#ddd" /><rect x="14" y="1" width="11" height="16" fill="#cfcfcf" /><circle cx="20" cy="9" r="2" fill="#fff" /></svg>
            <span className="text-[11px] leading-[15px] mt-[3px] text-[#c4c4c4] whitespace-nowrap">创建刀具</span>
          </div>
          <div className="flex flex-col items-start shrink-0 -ml-[2px]">
            <div className="w-[22px] h-[30px] flex items-center"><svg width="22" height="26" viewBox="0 0 22 26"><path d="M2 5 14 1v10L6 24l-4-4Z" fill="#ddd" /></svg></div>
            <span className="text-[11px] leading-[15px] mt-[3px] text-[#c4c4c4] whitespace-nowrap">创建</span>
            <span className="ml-[18px] mt-[16px] text-[11px] text-[#3b8caa] leading-[14px]">方</span>
          </div>
        </div>
        <div className="w-[320px] shrink-0" />
        <TopRibbonRight />
      </div>

      {/* menu row */}
      <div className="h-[63px] shrink-0 flex items-center">
        <svg width="38" height="30" viewBox="0 0 38 30" className="ml-[8px]">
          <rect x="0" y="1" width="38" height="7" fill="#7f9ee0" />
          <path d="M4 2h28M6 5h26M5 12h26M5 18h26M5 24h26" stroke="#667" strokeWidth="1.200" />
          <path d="M22 9v18l4-4 4 7 3-1-4-7h6Z" fill="#fff" stroke="#666" />
        </svg>
        <span className="ml-[4px] text-[12px] text-[#333] whitespace-nowrap">菜单(M</span>
      </div>

      {/* body */}
      <div className="flex-1 min-h-0 flex">
        <div className="w-[87px] h-full flex shrink-0 overflow-hidden"><SideTabs /><Navigator /></div>
        <div className="w-[320px] shrink-0" />
        <div className="flex-1 min-w-0 flex flex-col">
          <div className="h-[22px] shrink-0 flex items-center text-[13px] text-[#333] border-t border-[#e0e0e0] border-b-[2px] border-b-[#4f9bb7]">
            <div className="w-[91px] h-full bg-[#4f9bb7] text-white flex items-center justify-end pr-[5px] overflow-hidden whitespace-nowrap shrink-0 gap-[4px]">
              <span className="shrink-0">教学案例.prt</span>
              <svg width="8" height="9" viewBox="0 0 8 9" className="shrink-0"><rect x="0.500" y="0.500" width="7" height="8" rx="1" fill="none" stroke="#fff" /></svg>
              <X size={10} className="opacity-70 shrink-0" />
            </div>
            <span className="ml-[5px]"><FileCube /></span>
            <span className="ml-[3px] whitespace-nowrap">_model2.prt</span>
            <span className="ml-[20px]"><FileCube /></span>
            <span className="ml-[6px] whitespace-nowrap">_model3.prt</span>
            <svg width="8" height="9" viewBox="0 0 8 9" className="ml-[5px]"><rect x="0.500" y="0.500" width="7" height="8" rx="1" fill="none" stroke="#666" /></svg>
          </div>
          <ModelView />
        </div>
      </div>

      {/* status line */}
      <div className="h-[18px] shrink-0 flex items-center border-t border-[#c8c8c8] bg-white">
        <span className="ml-[2px] text-[12px] font-medium text-[#222]">选择曲线</span>
        <svg width="12" height="12" viewBox="0 0 12 12" className="ml-[917px]">
          <path d="M0 3V0H3M9 0H12V3M12 9V12H9M3 12H0V9" stroke="#aaa" fill="none" />
          <rect x="2" y="3" width="8" height="6" fill="#6a8ab8" />
        </svg>
      </div>

      <Taskbar />

      <FlowDialog />

      {/* cursor highlight + tooltip */}
      <div className="absolute left-[352px] top-[425px] w-[40px] h-[40px] rounded-full bg-[#f9a8c0]/45" />
      <svg width="14" height="20" viewBox="0 0 14 20" className="absolute left-[372px] top-[446px]">
        <path d="M1 1V16L5 12.500 7.500 19 10 18 7.500 12H13Z" fill="#fff" stroke="#111" />
      </svg>
      <div className="absolute left-[375px] top-[463px] w-[60px] h-[29px] bg-white border border-[#e4e4e4] shadow-[1px_1px_2px_#9996] text-[12px] text-[#c4c4c4] flex items-center justify-center">添加新集</div>

      {/* netdisk / speed widget */}
      <div className="absolute left-[850px] top-[28px] w-[72px] h-[52px] rounded-r-[24px] bg-[#2a2f36] flex items-end justify-between pl-[12px] pr-[9px] pb-[5px] text-[#e8e8e8]">
        <span className="text-[10px] text-[#3fc060] font-bold leading-none mb-[3px]">↓</span>
        <span className="text-[12px] leading-none mb-[2px] whitespace-nowrap">0<span className="text-[10px] text-[#9a9a9a]">K/s</span></span>
      </div>
      <div className="absolute left-[802px] top-[30px] w-[57px] h-[57px] rounded-full bg-[#2e3339] border-[2px] border-[#2e3339] flex items-center justify-center">
        <div className="w-[49px] h-[49px] rounded-full border-[2px] border-b-[#d8c84a] border-l-[#e8863a] border-t-[#e86a3a] border-r-[#6ac070] flex items-center justify-center pt-[4px]">
          <span className="text-[25px] font-light text-white leading-none whitespace-nowrap">83<span className="text-[9px]">%</span></span>
        </div>
      </div>
      <div className="absolute left-[813px] top-[28px] w-[104px] h-[25px] rounded-[3px] flex overflow-hidden border border-[#1e90f0]">
        <div className="w-[29px] bg-[#1e90f0] flex items-center justify-center">
          <svg width="20" height="18" viewBox="0 0 20 18" fill="none" stroke="#fff" strokeWidth="2.400"><circle cx="10" cy="6" r="4" /><circle cx="5.500" cy="12" r="4" /><circle cx="14.500" cy="12" r="4" /></svg>
        </div>
        <div className="flex-1 bg-[#c4eafb] text-[#49a6d8] text-[12px] flex items-center justify-center">拖拽上传</div>
      </div>

      {/* timer bubble */}
      <div className="absolute left-[980px] top-[90px] w-[48px] h-[48px] rounded-full bg-gradient-to-b from-[#3d96ee] to-[#58bbf7] border-[2px] border-[#d8ecfb] flex items-center justify-center pr-[3px] text-[15px] text-white overflow-hidden">02:10</div>

      {/* IME bar */}
      <div className="absolute left-[785px] top-[193px] w-[240px] h-[25px] bg-white border border-[#bcdcf8] flex items-center pl-[28px] text-[#2a78d8]">
        {[
          <span key="zh" className="text-[14px] font-bold leading-none">中</span>,
          <span key="pt" className="text-[13px] font-bold leading-none">°,</span>,
          <svg key="sm" width="16" height="16" viewBox="0 0 16 16" fill="none" stroke="#2a78d8" strokeWidth="1.600"><circle cx="8" cy="8" r="6.500" /><path d="M5 9.500q3 3 6 0M5.500 6h.5M10 6h.5" /></svg>,
          <svg key="pe" width="14" height="14" viewBox="0 0 14 14"><path d="M3 9 10 2l2 2-7 7H3ZM1 13h12" stroke="#2a78d8" strokeWidth="1.600" fill="none" /></svg>,
          <svg key="sc" width="14" height="14" viewBox="0 0 14 14" fill="none" stroke="#2a78d8" strokeWidth="1.600"><circle cx="3.500" cy="11" r="2" /><circle cx="10.500" cy="11" r="2" /><path d="M4.500 9.500 11 1M9.500 9.500 3 1" /></svg>,
          <svg key="kb" width="16" height="12" viewBox="0 0 16 12"><rect x="0.800" y="0.800" width="14.400" height="10.400" rx="1" fill="none" stroke="#2a78d8" strokeWidth="1.400" /><path d="M3 4h10M3 6.500h10M5 9h6" stroke="#2a78d8" strokeDasharray="1.500 1" /></svg>,
          <svg key="us" width="12" height="14" viewBox="0 0 12 14" fill="#b8d4f0"><circle cx="6" cy="4" r="3" /><path d="M0 14c0-8 12-8 12 0Z" /></svg>,
          <svg key="sh" width="16" height="14" viewBox="0 0 16 14"><path d="M5 0 8 2l3-2 5 4-2 3-2-1v8H4V6L2 7 0 4Z" fill="#1c6ad8" /></svg>,
          <svg key="ge" width="14" height="14" viewBox="0 0 14 14"><path d="M7 0 13 3.500V10.500L7 14 1 10.500V3.500Z" fill="#2a78d8" /><circle cx="7" cy="7" r="2.400" fill="#fff" /></svg>,
        ].map((icon, i) => (
          <div key={i} className="w-[23px] flex justify-center items-center shrink-0">{icon}</div>
        ))}
      </div>
      <span className="absolute left-[989px] top-[194px] w-[6px] h-[6px] rounded-full bg-[#f0703c]" />
      <div className="absolute left-[781px] top-[191px] w-[27px] h-[27px] rounded-[9px] bg-[#1c7ce4] text-white text-[15px] font-bold flex items-center justify-center">王</div>

      {/* edge handle */}
      <div className="absolute left-[1017px] top-[512px] w-[8px] h-[45px] rounded-l-[3px] bg-[#3f9a58] border-t-[8px] border-t-[#555]" />
    </div>
  );
}
